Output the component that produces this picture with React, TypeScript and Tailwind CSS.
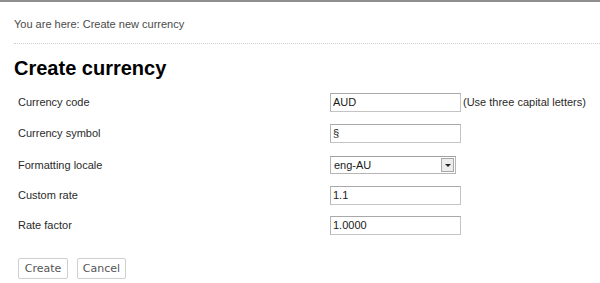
import React from "react";

const font = { fontFamily: '"Liberation Sans", Arial, sans-serif' };

function TextBox({ value }: { value: string }) {
  return (
    <div className="w-[131px] h-[19px] border border-[#c4c4c4] border-t-[#a9a9a9] border-l-[#b5b5b5] bg-white flex items-center pl-[2px] text-[11px] text-[#1a1a1a] leading-none">
      {value}
    </div>
  );
}

function Row({ label, children, h }: { label: string; children: React.ReactNode; h: string }) {
  return (
    <div className={`flex items-center ${h}`}>
      <div className="w-[316px] pl-[4px] text-[11px] text-[#2a2a2a]">{label}</div>
      <div className="flex items-center">{children}</div>
    </div>
  );
}

export default function App() {
  return (
    <div className="w-[600px] h-[283px] bg-white overflow-hidden" style={font}>
      <div className="h-[2px] bg-[#8e8e8e]" />
      <div className="pl-[14px]">
        <div className="pt-[14px] text-[11px] leading-[16px] text-[#4a4a4a]">
          You are here: Create new currency
        </div>
        <div className="mt-[11px] border-t border-dotted border-[#cfcfcf]" />
        <h1 className="mt-[12px] text-[20px] leading-[24px] font-bold text-black">Create currency</h1>
        <div className="mt-[7px]">
          <Row label="Currency code" h="h-[31px]">
            <TextBox value="AUD" />
            <span className="ml-[2px] text-[11px] text-[#2a2a2a]">(Use three capital letters)</span>
          </Row>
          <Row label="Currency symbol" h="h-[31px]">
            <TextBox value="§" />
          </Row>
          <Row label="Formatting locale" h="h-[32px]">
            <div className="w-[126px] h-[18px] border border-[#b5b5b5] border-t-[#a0a0a0] bg-white flex items-center">
              <span className="flex-1 pl-[3px] text-[11px] text-[#1a1a1a] leading-none">eng-AU</span>
              <div className="w-[13px] h-[14px] mr-[1px] border border-[#a8a8a8] bg-[#ececec] flex items-center justify-center">
                <div className="w-0 h-0 border-l-[3px] border-r-[3px] border-t-[3px] border-l-transparent border-r-transparent border-t-[#222]" />
              </div>
            </div>
          </Row>
          <Row label="Custom rate" h="h-[29px]">
            <TextBox value="1.1" />
          </Row>
          <Row label="Rate factor" h="h-[30px]">
            <TextBox value="1.0000" />
          </Row>
        </div>
        <div className="mt-[18px] ml-[4px] flex gap-[9px]" style={{ fontFamily: '"DejaVu Sans", Verdana, sans-serif' }}>
          <button className="h-[21px] w-[50px] border border-[#cfcfcf] rounded-[2px] bg-white text-[11px] text-[#555] leading-none">
            Create
          </button>
          <button className="h-[21px] w-[49px] border border-[#cfcfcf] rounded-[2px] bg-white text-[11px] text-[#555] leading-none">
            Cancel
          </button>
        </div>
      </div>
    </div>
  );
}
